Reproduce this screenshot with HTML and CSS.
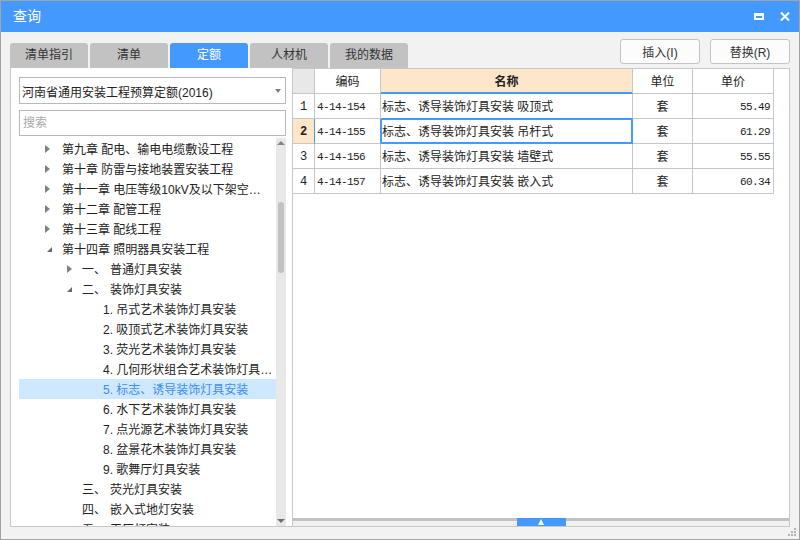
FILE: index.html
```html
<!DOCTYPE html>
<html lang="zh-CN">
<head>
<meta charset="utf-8">
<title>查询</title>
<link rel="stylesheet" href="styles.css">
</head>
<body>
<div class="window">
  <div class="titlebar">
    <span class="title">查询</span>
    <div class="win-ctrls">
      <svg class="ico" width="10" height="7" viewBox="0 0 10 7"><rect x="1" y="1" width="8" height="5" fill="none" stroke="#fff" stroke-width="2"/><rect x="0" y="0" width="10" height="3" fill="#fff"/></svg>
      <svg class="ico" width="10" height="9" viewBox="0 0 10 9"><path d="M1 0.5 L9 8.5 M9 0.5 L1 8.5" stroke="#fff" stroke-width="2" fill="none"/></svg>
    </div>
  </div>

  <div class="toolbar">
    <div class="tabs">
      <div class="tab">清单指引</div>
      <div class="tab">清单</div>
      <div class="tab active">定额</div>
      <div class="tab">人材机</div>
      <div class="tab">我的数据</div>
    </div>
    <div class="actions">
      <button class="btn">插入(I)</button>
      <button class="btn">替换(R)</button>
    </div>
  </div>

  <div class="main">
    <div class="left">
      <div class="select"><span>河南省通用安装工程预算定额(2016)</span><i class="caret"></i></div>
      <div class="search">搜索</div>
      <div class="tree-wrap">
        <ul class="tree">
          <li class="row l1"><i class="tg r"></i>第九章 配电、输电电缆敷设工程</li>
          <li class="row l1"><i class="tg r"></i>第十章 防雷与接地装置安装工程</li>
          <li class="row l1"><i class="tg r"></i>第十一章 电压等级10kV及以下架空配电线路工程</li>
          <li class="row l1"><i class="tg r"></i>第十二章 配管工程</li>
          <li class="row l1"><i class="tg r"></i>第十三章 配线工程</li>
          <li class="row l1"><i class="tg d"></i>第十四章 照明器具安装工程</li>
          <li class="row l2"><i class="tg r"></i><span class="num">一、</span>普通灯具安装</li>
          <li class="row l2"><i class="tg d"></i><span class="num">二、</span>装饰灯具安装</li>
          <li class="row l3">1. 吊式艺术装饰灯具安装</li>
          <li class="row l3">2. 吸顶式艺术装饰灯具安装</li>
          <li class="row l3">3. 荧光艺术装饰灯具安装</li>
          <li class="row l3">4. 几何形状组合艺术装饰灯具安装</li>
          <li class="row l3 sel">5. 标志、诱导装饰灯具安装</li>
          <li class="row l3">6. 水下艺术装饰灯具安装</li>
          <li class="row l3">7. 点光源艺术装饰灯具安装</li>
          <li class="row l3">8. 盆景花木装饰灯具安装</li>
          <li class="row l3">9. 歌舞厅灯具安装</li>
          <li class="row l2"><i class="tg"></i><span class="num">三、</span>荧光灯具安装</li>
          <li class="row l2"><i class="tg"></i><span class="num">四、</span>嵌入式地灯安装</li>
          <li class="row l2"><i class="tg"></i><span class="num">五、</span>工厂灯安装</li>
        </ul>
        <div class="vscroll">
          <i class="arr-up"></i>
          <div class="thumb"></div>
          <i class="arr-down"></i>
        </div>
      </div>
    </div>

    <div class="right">
      <div class="grid">
        <div class="c h rn"></div>
        <div class="c h">编码</div>
        <div class="c h name-h">名称</div>
        <div class="c h">单位</div>
        <div class="c h">单价</div>

        <div class="c rn">1</div>
        <div class="c code">4-14-154</div>
        <div class="c name above-sel">标志、诱导装饰灯具安装 吸顶式</div>
        <div class="c unit">套</div>
        <div class="c price">55.49</div>

        <div class="c rn rn-sel">2</div>
        <div class="c code left-sel">4-14-155</div>
        <div class="c name focus">标志、诱导装饰灯具安装 吊杆式</div>
        <div class="c unit">套</div>
        <div class="c price">61.29</div>

        <div class="c rn">3</div>
        <div class="c code">4-14-156</div>
        <div class="c name">标志、诱导装饰灯具安装 墙壁式</div>
        <div class="c unit">套</div>
        <div class="c price">55.55</div>

        <div class="c rn">4</div>
        <div class="c code">4-14-157</div>
        <div class="c name">标志、诱导装饰灯具安装 嵌入式</div>
        <div class="c unit">套</div>
        <div class="c price">60.34</div>
      </div>
      <div class="fill"></div>
      <div class="hscroll"><div class="handle"><i></i></div></div>
    </div>
  </div>

  <svg class="grip" width="8" height="8" viewBox="0 0 8 8">
    <rect x="6" y="0" width="2" height="2" fill="#b4b4b4"/>
    <rect x="3" y="3" width="2" height="2" fill="#b4b4b4"/>
    <rect x="6" y="3" width="2" height="2" fill="#b4b4b4"/>
    <rect x="0" y="6" width="2" height="2" fill="#b4b4b4"/>
    <rect x="3" y="6" width="2" height="2" fill="#b4b4b4"/>
    <rect x="6" y="6" width="2" height="2" fill="#b4b4b4"/>
  </svg>
</div>
</body>
</html>
```

FILE: styles.css
```css
* { box-sizing: border-box; }
html, body { margin: 0; padding: 0; }
body {
  width: 800px;
  height: 540px;
  overflow: hidden;
  background: #f2f2f2;
  font-family: "Liberation Sans", "Noto Sans CJK SC", sans-serif;
  font-size: 12px;
  color: #222;
}
ul { list-style: none; margin: 0; padding: 0; }

.window {
  position: relative;
  width: 800px;
  height: 540px;
  border: 1px solid #a3a3a3;
  background: #f2f2f2;
  display: flex;
  flex-direction: column;
}

/* title bar */
.titlebar {
  flex: none;
  height: 31px;
  background: #4499ff;
  color: #fff;
  display: flex;
  align-items: center;
  padding: 0 9px 0 12px;
}
.title { font-size: 14px; line-height: 31px; }
.win-ctrls { margin-left: auto; display: flex; align-items: center; gap: 16px; }
.ico { display: block; }

/* tabs + buttons */
.toolbar {
  flex: none;
  height: 36px;
  display: flex;
  padding: 0 9px;
}
.tabs { display: flex; gap: 2px; margin-top: 11px; }
.tab {
  width: 78px;
  height: 25px;
  line-height: 25px;
  text-align: center;
  background: #c2c2c2;
  color: #333;
  border-radius: 3px 3px 0 0;
}
.tab.active { background: #4499ff; color: #fff; }
.actions { margin-left: auto; margin-top: 7px; display: flex; gap: 10px; align-items: flex-start; }
.btn {
  width: 80px;
  height: 25px;
  padding: 0;
  border: 1px solid #c4c4c4;
  border-radius: 3px;
  background: #fcfcfc;
  color: #333;
  font: inherit;
}

/* main area */
.main {
  flex: none;
  height: 459px;
  margin: 0 9px;
  display: flex;
}
.left {
  flex: none;
  width: 282px;
  background: #fff;
  border-left: 1px solid #c8c8c8;
  border-bottom: 1px solid #c8c8c8;
  display: flex;
  flex-direction: column;
}
.select {
  flex: none;
  height: 27px;
  margin: 9px 6px 0 8px;
  border: 1px solid #b8b8b8;
  display: flex;
  align-items: center;
  padding: 1px 4px 0 2px;
  color: #222;
  white-space: nowrap;
}
.caret {
  margin-left: auto;
  width: 0;
  height: 0;
  border-top: 4px solid #808080;
  border-left: 3px solid transparent;
  border-right: 3px solid transparent;
}
.search {
  flex: none;
  height: 26px;
  margin: 6px 6px 0 8px;
  border: 1px solid #b8b8b8;
  padding: 1px 0 0 3px;
  line-height: 23px;
  color: #a8a8a8;
}
.tree-wrap {
  flex: 1;
  min-height: 0;
  margin: 2px 6px 0 8px;
  display: flex;
  overflow: hidden;
}
.tree {
  flex: 1;
  min-width: 0;
  padding-top: 1px;
  overflow: hidden;
}
.row {
  height: 20px;
  padding-top: 2px;
  line-height: 18px;
  white-space: nowrap;
  overflow: hidden;
  text-overflow: ellipsis;
  padding-right: 8px;
  color: #222;
}
.row.l1 { padding-left: 26px; }
.row.l2 { padding-left: 46px; }
.row.l3 { padding-left: 84px; padding-right: 1px; }
.row.sel { background: #cde8ff; color: #3f8ef2; }
.tg {
  display: inline-block;
  width: 17px;
  height: 18px;
  vertical-align: top;
}
.tg.r::before {
  content: "";
  display: block;
  margin-top: 4px;
  width: 0;
  height: 0;
  border-left: 5px solid #808080;
  border-top: 4px solid transparent;
  border-bottom: 4px solid transparent;
}
.l2 .tg.r::before { margin-left: 2px; }
.tg.d::before {
  content: "";
  display: block;
  margin-top: 6px;
  margin-left: 2px;
  width: 0;
  height: 0;
  border-right: 5px solid #6a6a6a;
  border-top: 5px solid transparent;
}
.num { display: inline-block; width: 28px; }

.vscroll {
  flex: none;
  width: 10px;
  background: #e8e8e8;
  display: flex;
  flex-direction: column;
  align-items: center;
}
.arr-up {
  margin-top: 3px;
  width: 0;
  height: 0;
  border-bottom: 4px solid #858585;
  border-left: 4px solid transparent;
  border-right: 4px solid transparent;
}
.thumb {
  margin-top: 57px;
  width: 6px;
  height: 71px;
  border-radius: 3px;
  background: #c2c2c2;
}
.arr-down {
  margin-top: auto;
  margin-bottom: 3px;
  width: 0;
  height: 0;
  border-top: 4px solid #707070;
  border-left: 4px solid transparent;
  border-right: 4px solid transparent;
}

/* right grid */
.right {
  flex: 1;
  min-width: 0;
  background: #fff;
  border: 1px solid #c8c8c8;
  display: flex;
  flex-direction: column;
}
.grid {
  display: grid;
  grid-template-columns: 22px 66px 252px 60px 81px;
  grid-auto-rows: 25px;
}
.c {
  border-right: 1px solid #c6c6c6;
  border-bottom: 1px solid #c6c6c6;
  padding-top: 2px;
  line-height: 22px;
  white-space: nowrap;
  overflow: hidden;
}
.c.h { text-align: center; color: #222; }
.c.h.rn { background: #e8e8e8; }
.c.name-h {
  background: #fde6c9;
  font-weight: bold;
  border-bottom-color: #4499ff;
  box-shadow: inset 0 -1px 0 #4499ff;
}
.c.rn {
  text-align: center;
  font-family: "Liberation Mono", "Noto Sans CJK SC", monospace;
  font-size: 12px;
}
.c.rn-sel { background: #fde6c9; font-weight: bold; border-right-color: #4499ff; }
.c.code {
  padding-left: 2px;
  font-family: "Liberation Mono", monospace;
  font-size: 11px;
  letter-spacing: -0.6px;
}
.c.left-sel { border-right-color: #4499ff; }
.c.name { padding-left: 1px; }
.c.above-sel { border-bottom-color: #4499ff; }
.c.focus {
  border-right-color: #4499ff;
  border-bottom-color: #4499ff;
  box-shadow: inset 0 0 0 1px #4499ff;
}
.c.unit { text-align: center; }
.c.price {
  text-align: right;
  padding-right: 3px;
  font-family: "Liberation Mono", monospace;
  font-size: 11px;
  letter-spacing: -0.6px;
}
.fill { flex: 1; }
.hscroll {
  flex: none;
  height: 8px;
  border-top: 3px solid #c2c2c2;
  background: #f0f0f0;
  display: flex;
  justify-content: center;
}
.handle {
  width: 49px;
  height: 8px;
  margin-top: -3px;
  background: #4499ff;
  display: flex;
  justify-content: center;
  align-items: center;
}
.handle i {
  width: 0;
  height: 0;
  border-bottom: 6px solid #fff;
  border-left: 3px solid transparent;
  border-right: 3px solid transparent;
}

.grip {
  position: absolute;
  right: 3px;
  bottom: 3px;
}
```
